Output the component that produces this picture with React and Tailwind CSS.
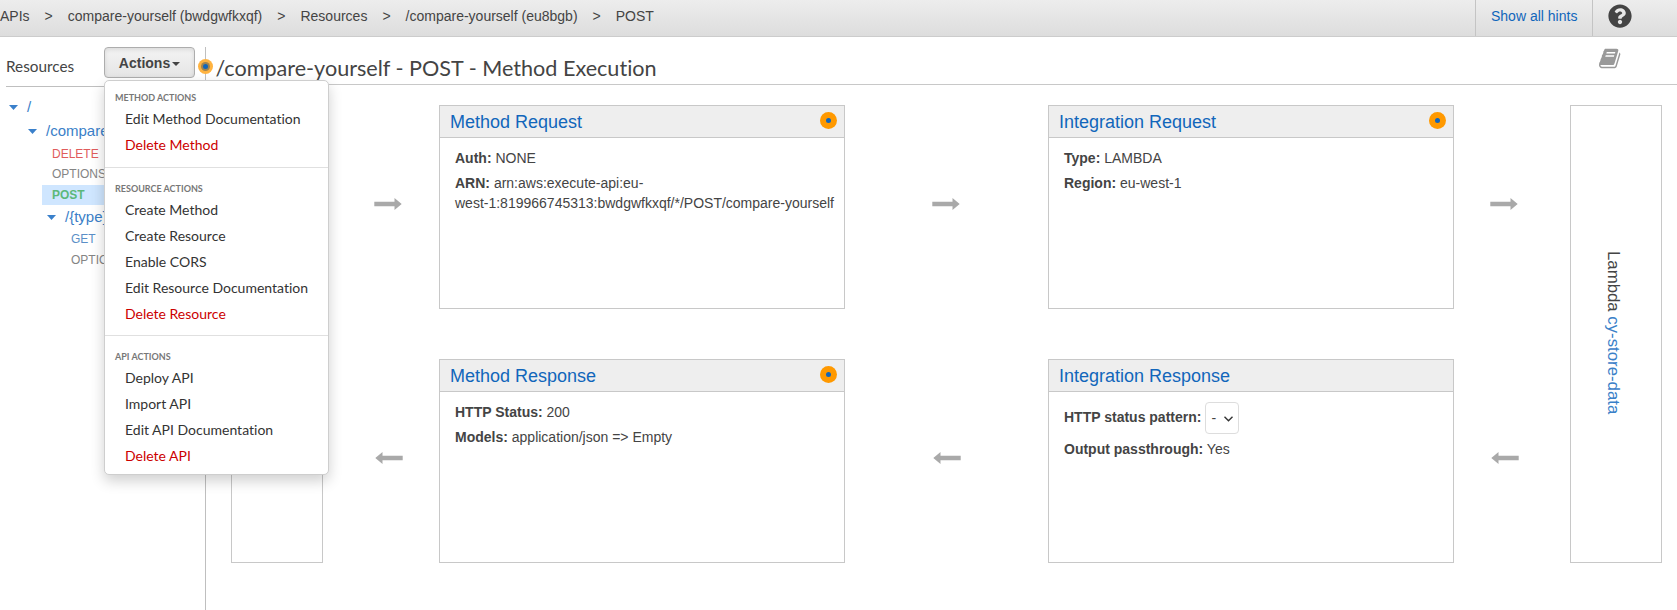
import React from "react";
import { FaQuestionCircle } from "react-icons/fa";

const crumbs = ["APIs", "compare-yourself (bwdgwfkxqf)", "Resources", "/compare-yourself (eu8bgb)", "POST"];

const menu = [
  { title: "METHOD ACTIONS", items: ["Edit Method Documentation", "Delete Method"] },
  {
    title: "RESOURCE ACTIONS",
    items: ["Create Method", "Create Resource", "Enable CORS", "Edit Resource Documentation", "Delete Resource"],
  },
  { title: "API ACTIONS", items: ["Deploy API", "Import API", "Edit API Documentation", "Delete API"] },
];

function TopBar() {
  return (
    <header className="flex h-[37px] shrink-0 justify-between border-b border-[#ccc] bg-linear-to-b from-[#ededed] to-[#dddddd] text-sm">
      <nav className="flex gap-[15px] pt-[5px] leading-[22px] whitespace-pre">
        {crumbs.map((c, i) => (
          <React.Fragment key={c}>
            {i > 0 && <span>&gt;</span>}
            <span>{c}</span>
          </React.Fragment>
        ))}
      </nav>
      <div className="flex w-[202px]">
        <a className="w-[118px] border-x border-[#c4c4c4] pt-[5px] pl-[15px] leading-[22px] text-[#1166bb]">Show all hints</a>
        <FaQuestionCircle className="mt-1 ml-[15px] size-6 text-[#444]" />
      </div>
    </header>
  );
}

function Caret() {
  return (
    <svg className="h-[5px] w-[9px] shrink-0" viewBox="0 0 9 5">
      <path d="M0 0h9L4.5 5z" fill="#3a80cb" />
    </svg>
  );
}

function BookIcon({ className }) {
  return (
    <svg className={className} viewBox="0 0 1792 1792" fill="currentColor">
      <path d="M1639 478q40 57 18 129l-275 906q-19 64-76.5 107.500t-122.500 43.500h-923q-77 0-148.500-53.500t-99.500-131.500q-24-67-2-127 0-4 3-27t4-37q1-8-3-21.500t-3-19.500q2-11 8-21t16.500-23.500 16.500-23.500q23-38 45-91.500t30-91.500q3-10 .5-30t-.5-28q3-11 17-28t17-23q21-36 42-92t25-90q1-9-2.500-32t.5-28q4-13 22-30.500t22-22.500q19-26 42.500-84.500t27.500-96.500q1-8-3-25.500t-2-26.500q2-8 9-18t18-23 17-21q8-12 16.500-30.500t15-35 16-36 19.500-32 26.500-23.500 36-11.500 47.500 5.500l-1 3q38-9 51-9h761q74 0 114 56t18 130l-274 906q-36 119-71.500 153.500t-128.500 34.500h-869q-27 0-38 15-11 16-1 43 24 70 144 70h923q29 0 56-15.500t35-41.500l300-987q7-22 5-57 38 15 59 43zm-1064 2q-4 13 2 22.500t20 9.500h608q13 0 25.500-9.500t16.500-22.500l21-64q4-13-2-22.500t-20-9.500h-608q-13 0-25.500 9.500t-16.500 22.500zm-83 256q-4 13 2 22.500t20 9.500h608q13 0 25.500-9.500t16.500-22.500l21-64q4-13-2-22.500t-20-9.500h-608q-13 0-25.500 9.500t-16.500 22.500z" />
    </svg>
  );
}

function ActionsMenu() {
  return (
    <div className="absolute top-[33px] left-0 z-10 flex h-[395px] w-[225px] flex-col rounded-[5px] border border-[#cecece] bg-white pt-[10px] font-['Lato',sans-serif] shadow-[0_6px_14px_rgba(0,0,0,0.19)] [font-variant-ligatures:none]">
      {menu.map((group, i) => (
        <section key={group.title} className={i ? "mt-[8.6px] border-t border-[#e0e0e0] pt-[14px]" : ""}>
          <h3 className="pb-[2px] pl-[10px] text-[9px] leading-[13px] font-bold text-[#777]">{group.title}</h3>
          {group.items.map((item) => (
            <div
              key={item}
              className={
                item.startsWith("Delete")
                  ? "h-[26px] pl-5 text-sm leading-[26px] text-[#cc0000]"
                  : "h-[26px] pl-5 text-sm leading-[26px] text-[#333]"
              }
            >
              {item}
            </div>
          ))}
        </section>
      ))}
    </div>
  );
}

function Sidebar() {
  return (
    <aside className="w-[205px] shrink-0">
      <div className="ml-[6px] flex h-[40px] border-b border-[#bfbfbf]">
        <h2 className="w-[98px] pt-[8px] font-['Lato',sans-serif] text-[15.3px] leading-[22px]">Resources</h2>
        <div className="relative">
          <button className="flex h-[31px] w-[91px] items-center justify-center gap-[2px] rounded-[4px] border border-[#adadad] bg-linear-to-b from-[#f4f4f4] to-[#e5e5e5] pt-px text-sm font-bold shadow-[inset_0_2px_4px_rgba(0,0,0,0.1)]">
            Actions
            <svg className="mt-[2px] h-[4px] w-[8px]" viewBox="0 0 8 4">
              <path d="M0 0h8L4 4z" fill="#444" />
            </svg>
          </button>
          <ActionsMenu />
        </div>
      </div>
      <div className="w-[105px] overflow-hidden pt-[8px] text-[15px] whitespace-nowrap text-[#3a80c8]">
        <div className="flex h-6 items-center gap-[9px] pl-[9px]">
          <Caret />
          <span>/</span>
        </div>
        <div className="flex h-6 items-center gap-[9px] pl-7">
          <Caret />
          <span>/compare-yourself</span>
        </div>
        <div className="ml-[42px] text-xs leading-5">
          <div className="mt-px pl-[10px] text-[#e05c5c]">DELETE</div>
          <div className="pl-[10px] text-[#848484]">OPTIONS</div>
          <div className="mt-px bg-[#cfe6ff] pl-[10px] font-bold text-[#5cb87a]">POST</div>
        </div>
        <div className="flex h-6 items-center gap-[9px] pl-[47px]">
          <Caret />
          <span>/&#123;type&#125;</span>
        </div>
        <div className="pl-[71px] text-xs leading-[21px]">
          <div className="text-[#5b8fc7]">GET</div>
          <div className="text-[#848484]">OPTIONS</div>
        </div>
      </div>
    </aside>
  );
}

function HintDot() {
  return (
    <span className="flex size-[17px] items-center justify-center rounded-full bg-[#ff9900]">
      <span className="size-[5px] rounded-full bg-[#1166bb]" />
    </span>
  );
}

function Card({ title, hint, children }) {
  return (
    <section className="h-[204px] w-[406px] border border-[#c8c8c8]">
      <div className="flex h-8 justify-between border-b border-[#c8c8c8] bg-[#eee] pr-[7px] pl-[10px]">
        <h3 className="text-lg leading-[32px] text-[#1166bb]">{title}</h3>
        {hint && (
          <div className="pt-[6px]">
            <HintDot />
          </div>
        )}
      </div>
      <div className="flex flex-col gap-[5px] pt-[10px] pl-[15px] text-sm leading-5">{children}</div>
    </section>
  );
}

function Arrow({ left, className }) {
  return (
    <div className={"flex items-center pb-[6px] " + className}>
      <svg className={left ? "h-3 w-[28px] rotate-180" : "h-3 w-[28px]"} viewBox="0 0 28 12">
        <path d="M0.3 3.8H20.5V0L27.7 6L20.5 12V8.2H0.3z" fill="#a9a9a9" />
      </svg>
    </div>
  );
}

function Flow() {
  return (
    <div className="grid grid-cols-[92px_116px_406px_203px_406px_116px_92px] grid-rows-[204px_204px] gap-y-[50px] pt-5 pl-[25px]">
      <div className="row-span-2 border border-[#c8c8c8]" />
      <Arrow className="pl-[51px]" />
      <Card title="Method Request" hint>
        <p><b>Auth:</b> NONE</p>
        <p>
          <b>ARN:</b> arn:aws:execute-api:eu-
          <br />
          west-1:819966745313:bwdgwfkxqf/*/POST/compare-yourself
        </p>
      </Card>
      <Arrow className="pl-[87px]" />
      <Card title="Integration Request" hint>
        <p><b>Type:</b> LAMBDA</p>
        <p><b>Region:</b> eu-west-1</p>
      </Card>
      <Arrow className="pl-[36px]" />
      <div className="row-span-2 flex flex-col items-center border border-[#c8c8c8] pt-[144.5px]">
        <div className="mr-[6px] text-[16.8px] leading-6 whitespace-nowrap [writing-mode:vertical-rl]">
          Lambda <a className="text-[#3a80c8]">cy-store-data</a>
        </div>
      </div>
      <Arrow left className="pl-[52px]" />
      <Card title="Method Response" hint>
        <p><b>HTTP Status:</b> 200</p>
        <p><b>Models:</b> application/json =&gt; Empty</p>
      </Card>
      <Arrow left className="pl-[88px]" />
      <Card title="Integration Response">
        <div className="flex h-8 items-center">
          <b className="pb-[2px]">HTTP status pattern:</b>
          <span className="ml-1 flex h-8 w-[34px] items-center justify-between rounded-[4px] border border-[#ddd] pr-[5px] pl-[5px]">
            <span className="pb-px">-</span>
            <svg className="mt-px h-[6px] w-[9px]" viewBox="0 0 9 6" fill="none" stroke="#333" strokeWidth="1.4">
              <path d="M0.5 0.8L4.5 4.8L8.5 0.8" />
            </svg>
          </span>
        </div>
        <p><b>Output passthrough:</b> Yes</p>
      </Card>
      <Arrow left className="pl-[37px]" />
    </div>
  );
}

export default function App() {
  return (
    <div className="flex h-[610px] w-[1677px] flex-col overflow-hidden bg-white font-['Liberation_Sans',Arial,sans-serif] text-[#444]">
      <TopBar />
      <div className="flex flex-1 pt-[10px]">
        <Sidebar />
        <main className="relative flex-1 border-l border-[#bfbfbf]">
          <span className="absolute top-3 left-[-8px] flex size-[15px] items-center justify-center rounded-full bg-[#ffb340]">
            <span className="flex size-[9px] items-center justify-center rounded-full bg-[#a08450]">
              <span className="size-[5px] rounded-full bg-[#1166bb]" />
            </span>
          </span>
          <div className="flex h-[38px] justify-between border-b border-[#c8c8c8] pr-[55px] pl-[9.5px]">
            <h1 className="pt-[7px] font-['Lato',sans-serif] text-[21.6px] leading-[28px] [font-variant-ligatures:none]">/compare-yourself - POST - Method Execution</h1>
            <BookIcon className="size-[23px] text-[#999]" />
          </div>
          <Flow />
        </main>
      </div>
    </div>
  );
}
